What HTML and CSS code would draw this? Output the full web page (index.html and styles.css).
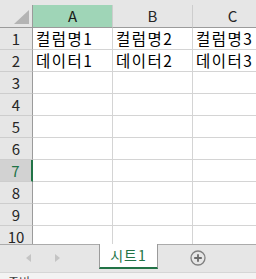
FILE: index.html
```html
<!DOCTYPE html>
<html lang="ko">
<head>
    <meta charset="UTF-8">
    <title>시트1</title>
    <link rel="stylesheet" href="styles.css">
</head>
<body>
    <div class="top-strip"></div>

    <div class="sheet">
        <div class="corner"><div class="corner-tri"></div></div>
        <div class="col-head active">A</div>
        <div class="col-head">B</div>
        <div class="col-head">C</div>

        <div class="row-head">1</div>
        <div class="cell">컬럼명1</div>
        <div class="cell">컬럼명2</div>
        <div class="cell">컬럼명3</div>

        <div class="row-head">2</div>
        <div class="cell">데이터1</div>
        <div class="cell">데이터2</div>
        <div class="cell">데이터3</div>

        <div class="row-head">3</div><div class="cell"></div><div class="cell"></div><div class="cell"></div>
        <div class="row-head">4</div><div class="cell"></div><div class="cell"></div><div class="cell"></div>
        <div class="row-head">5</div><div class="cell"></div><div class="cell"></div><div class="cell"></div>
        <div class="row-head">6</div><div class="cell"></div><div class="cell"></div><div class="cell"></div>
        <div class="row-head current">7</div><div class="cell"></div><div class="cell"></div><div class="cell"></div>
        <div class="row-head">8</div><div class="cell"></div><div class="cell"></div><div class="cell"></div>
        <div class="row-head">9</div><div class="cell"></div><div class="cell"></div><div class="cell"></div>
        <div class="row-head">10</div><div class="cell"></div><div class="cell"></div><div class="cell"></div>
    </div>

    <div class="tab-bar">
        <div class="nav-arrows">
            <span class="arrow left"></span>
            <span class="arrow right"></span>
        </div>
        <div class="tab">시트1</div>
        <div class="add-sheet">
            <svg width="16" height="16" viewBox="0 0 16 16">
                <circle cx="8" cy="8" r="7" fill="none" stroke="#808080" stroke-width="1.3"/>
                <path d="M8 4.2v7.6M4.2 8h7.6" stroke="#6a6a6a" stroke-width="1.8"/>
            </svg>
        </div>
    </div>

    <div class="status-bar">준비</div>
</body>
</html>
```

FILE: styles.css
```css
body {
    margin: 0;
    width: 256px;
    height: 279px;
    overflow: hidden;
    background-color: #fff;
    font-family: "Noto Sans CJK KR", "Noto Sans", sans-serif;
    color: #000;
}

.top-strip {
    height: 5px;
    background-color: #e6e6e6;
}

/* grid of headers and cells */
.sheet {
    display: grid;
    grid-template-columns: 33px 80px 80px 80px;
    grid-template-rows: 23px repeat(10, 22px);
    height: 239px;
    overflow: hidden;
}

.corner {
    position: relative;
    background-color: #e6e6e6;
    border-right: 1px solid #9b9b9b;
    border-bottom: 1px solid #9b9b9b;
}

.corner-tri {
    position: absolute;
    right: 3px;
    bottom: 3px;
    width: 0;
    height: 0;
    border-left: 15px solid transparent;
    border-bottom: 14px solid #b4b4b4;
}

.col-head {
    background-color: #e6e6e6;
    border-right: 1px solid #cdcdcd;
    border-bottom: 1px solid #9b9b9b;
    text-align: center;
    font-size: 15px;
    line-height: 22px;
    color: #262626;
}

.col-head.active {
    background-color: #9fd5b7;
    color: #1a1a1a;
}

.row-head {
    background-color: #e6e6e6;
    border-right: 1px solid #9b9b9b;
    border-bottom: 1px solid #cdcdcd;
    text-align: center;
    font-size: 15px;
    line-height: 21px;
    color: #262626;
}

.row-head.current {
    background-color: #d2d2d2;
    color: #217346;
    border-right: 2px solid #217346;
}

.cell {
    border-right: 1px solid #d4d4d4;
    border-bottom: 1px solid #d4d4d4;
    padding-left: 3px;
    font-size: 15.5px;
    letter-spacing: 1.5px;
    line-height: 21px;
    white-space: nowrap;
    overflow: hidden;
}

/* sheet tabs */
.tab-bar {
    display: flex;
    align-items: flex-start;
    height: 27px;
    background-color: #e6e6e6;
    border-top: 1px solid #ababab;
}

.nav-arrows {
    display: flex;
    align-items: center;
    gap: 24px;
    width: 99px;
    height: 26px;
    padding-left: 26px;
    box-sizing: border-box;
}

.arrow {
    width: 0;
    height: 0;
    border-top: 4px solid transparent;
    border-bottom: 4px solid transparent;
}

.arrow.left {
    border-right: 5px solid #c4c4c4;
}

.arrow.right {
    border-left: 5px solid #c4c4c4;
}

.tab {
    width: 57px;
    height: 23px;
    margin-top: -1px;
    background-color: #fff;
    border-left: 1px solid #9b9b9b;
    border-right: 1px solid #9b9b9b;
    border-bottom: 2px solid #217346;
    text-align: center;
    font-size: 14px;
    letter-spacing: 1px;
    line-height: 23px;
    color: #217346;
}

.add-sheet {
    display: flex;
    align-items: center;
    justify-content: center;
    width: 80px;
    height: 26px;
}

.status-bar {
    height: 7px;
    overflow: hidden;
    background-color: #f3f3f3;
    border-top: 1px solid #d6d6d6;
    padding-left: 8px;
    font-size: 12px;
    line-height: 18px;
    color: #444;
}
```
